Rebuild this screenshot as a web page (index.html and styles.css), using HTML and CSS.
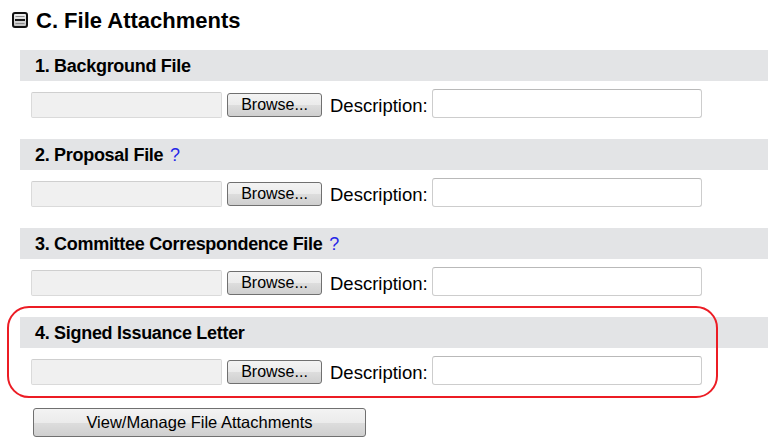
FILE: index.html
```html
<!DOCTYPE html>
<html lang="en">
<head>
    <meta charset="UTF-8">
    <title>File Attachments</title>
    <link rel="stylesheet" href="styles.css">
</head>
<body>

<div class="panel">
    <!-- Section title -->
    <h2 class="title">
        <svg class="toggle" width="16" height="16" viewBox="0 0 16 16">
            <defs>
                <linearGradient id="tg" x1="0" y1="0" x2="0" y2="1">
                    <stop offset="0" stop-color="#f6f6f6"/>
                    <stop offset="1" stop-color="#bdbdbd"/>
                </linearGradient>
            </defs>
            <rect x="1" y="1" width="14" height="14" rx="2" fill="url(#tg)" stroke="#111" stroke-width="2"/>
            <line x1="3.5" y1="4.5" x2="12.5" y2="4.5" stroke="#8c8c8c" stroke-width="1"/>
            <line x1="3" y1="8" x2="13" y2="8" stroke="#1a1a1a" stroke-width="2"/>
            <line x1="3.5" y1="11.5" x2="12.5" y2="11.5" stroke="#8c8c8c" stroke-width="1"/>
        </svg>
        C. File Attachments
    </h2>

    <div class="section">
        <div class="section-head">1. Background File</div>
        <div class="file-row">
            <input type="text" class="file-path" readonly>
            <button class="browse">Browse...</button>
            <label class="desc-label">Description:</label>
            <input type="text" class="desc">
        </div>
    </div>

    <div class="section">
        <div class="section-head">2. Proposal File <span class="help">?</span></div>
        <div class="file-row">
            <input type="text" class="file-path" readonly>
            <button class="browse">Browse...</button>
            <label class="desc-label">Description:</label>
            <input type="text" class="desc">
        </div>
    </div>

    <div class="section">
        <div class="section-head">3. Committee Correspondence File <span class="help">?</span></div>
        <div class="file-row">
            <input type="text" class="file-path" readonly>
            <button class="browse">Browse...</button>
            <label class="desc-label">Description:</label>
            <input type="text" class="desc">
        </div>
    </div>

    <!-- Highlighted section -->
    <div class="section highlight">
        <div class="section-head">4. Signed Issuance Letter</div>
        <div class="file-row">
            <input type="text" class="file-path" readonly>
            <button class="browse">Browse...</button>
            <label class="desc-label">Description:</label>
            <input type="text" class="desc">
        </div>
    </div>

    <button class="manage">View/Manage File Attachments</button>
</div>

</body>
</html>
```

FILE: styles.css
```css
body {
    margin: 0;
    background: #fff;
    font-family: "Liberation Sans", Arial, sans-serif;
    color: #000;
}
.panel {
    width: 768px;
}
.title {
    display: flex;
    align-items: flex-start;
    margin: 0;
    padding: 8px 0 0 12px;
    height: 50px;
    box-sizing: border-box;
    font-size: 22px;
    line-height: 26px;
    font-weight: bold;
}
.toggle {
    margin: 4px 8px 0 0;
}
.section {
    margin-left: 20px;
}
.section-head {
    height: 31px;
    line-height: 32px;
    background-color: #e3e4e6;
    padding-left: 15px;
    font-size: 18px;
    font-weight: bold;
    letter-spacing: -0.3px;
}
.help {
    color: #2626e8;
    font-weight: normal;
    margin-left: 2px;
}
.file-row {
    display: flex;
    align-items: flex-end;
    height: 29px;
    padding: 8px 0 21px 11px;
}
.file-path {
    width: 191px;
    height: 26px;
    box-sizing: border-box;
    margin: 0;
    background: #f0f0f0;
    border: 1px solid #dadada;
    border-top-color: #cfcfcf;
    border-radius: 2px;
}
.browse {
    width: 95px;
    height: 24px;
    margin: 0 0 1px 5px;
    padding: 0;
    border: 1px solid #707070;
    border-radius: 3px;
    background: linear-gradient(#f3f3f3 0%, #ebebeb 50%, #dddddd 51%, #cfcfcf 100%);
    font-family: "Liberation Sans", Arial, sans-serif;
    font-size: 16px;
    color: #000;
}
.desc-label {
    font-size: 18.5px;
    line-height: 20px;
    margin: 0 4px 2px 8px;
}
.desc {
    width: 270px;
    height: 29px;
    box-sizing: border-box;
    margin: 0;
    border: 1px solid #cdcdcd;
    border-top-color: #b9b9b9;
    border-radius: 3px;
    background: #fff;
}
.highlight {
    position: relative;
}
.highlight::before {
    content: "";
    position: absolute;
    top: -11px;
    left: -13px;
    width: 711px;
    height: 92px;
    box-sizing: border-box;
    border: 2px solid #ec1c24;
    border-radius: 22px;
}
.manage {
    display: block;
    width: 333px;
    height: 29px;
    margin: 2px 0 0 33px;
    padding: 0;
    border: 1px solid #707070;
    border-radius: 3px;
    background: linear-gradient(#f3f3f3 0%, #ebebeb 50%, #dddddd 51%, #cfcfcf 100%);
    font-family: "Liberation Sans", Arial, sans-serif;
    font-size: 16.5px;
    color: #000;
}
```
